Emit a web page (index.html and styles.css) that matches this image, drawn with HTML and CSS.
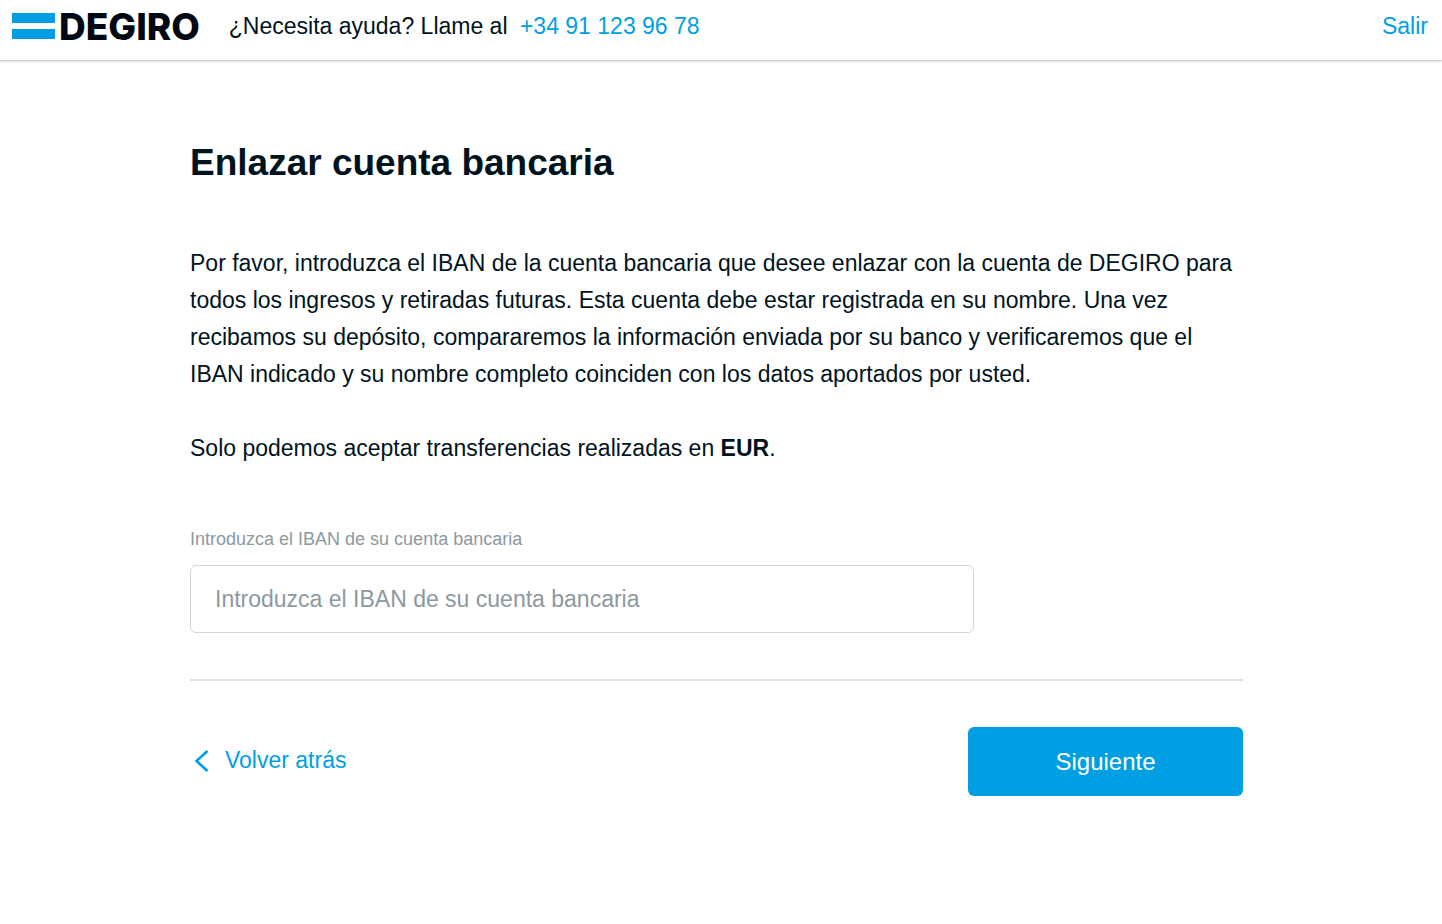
FILE: index.html
```html
<!DOCTYPE html>
<html lang="es">
<head>
  <meta charset="UTF-8">
  <meta name="viewport" content="width=device-width, initial-scale=1.0">
  <title>Enlazar cuenta bancaria</title>
  <link rel="stylesheet" href="styles.css">
</head>
<body>

  <header class="header">
    <a href="#" class="logo">
      <svg class="logo-bars" width="43" height="26" viewBox="0 0 43 26" aria-hidden="true">
        <path d="M0 0h43v10H0zM0 16h43v10H0z" fill="#009fe3" />
      </svg>
      <span class="logo-text">DEGIRO</span>
    </a>
    <p class="help">¿Necesita ayuda? Llame al <a href="tel:+34911239678" class="phone">+34 91 123 96 78</a></p>
    <a href="#" class="logout">Salir</a>
  </header>

  <main class="content">
    <h1 class="title">Enlazar cuenta bancaria</h1>

    <p class="text">Por favor, introduzca el IBAN de la cuenta bancaria que desee enlazar con la cuenta de DEGIRO para todos los ingresos y retiradas futuras. Esta cuenta debe estar registrada en su nombre. Una vez recibamos su depósito, compararemos la información enviada por su banco y verificaremos que el IBAN indicado y su nombre completo coinciden con los datos aportados por usted.</p>
    <p class="text">Solo podemos aceptar transferencias realizadas en <strong>EUR</strong>.</p>

    <form class="form">
      <label for="iban" class="label">Introduzca el IBAN de su cuenta bancaria</label>
      <input type="text" id="iban" class="input" placeholder="Introduzca el IBAN de su cuenta bancaria">

      <div class="actions">
        <a href="#" class="back">
          <svg width="16" height="24" viewBox="0 0 16 24" aria-hidden="true">
            <path d="M14.5 3L3.5 13L14.5 23" fill="none" stroke="#009fe3" stroke-width="2.6" />
          </svg>
          Volver atrás
        </a>
        <button type="submit" class="next">Siguiente</button>
      </div>
    </form>
  </main>

</body>
</html>
```

FILE: styles.css
```css
* {
  margin: 0;
  padding: 0;
  box-sizing: border-box;
}

body {
  font-family: "Liberation Sans", Arial, sans-serif;
  font-size: 23px;
  line-height: 37px;
  color: #00141e;
  background-color: #fff;
}

a {
  color: #009fe3;
  text-decoration: none;
}

.header {
  display: flex;
  align-items: center;
  height: 61px;
  padding: 0 14px 8px 12px;
  border-bottom: 1px solid #ccd6db;
  box-shadow: 0 1px 2px rgba(0, 20, 30, 0.15);
}

.logo {
  display: flex;
  align-items: center;
  gap: 4px;
}

.logo-text {
  font-family: Inter, sans-serif;
  font-size: 37px;
  font-weight: 800;
  color: #000814;
}

.help {
  margin-left: 29px;
}

.phone {
  margin-left: 6px;
}

.logout {
  margin-left: auto;
}

.content {
  padding: 78px 199px 48px 190px;
}

.title {
  margin-bottom: 58px;
  font-size: 37px;
  line-height: 48px;
}

.text {
  margin-bottom: 37px;
}

.form {
  padding-top: 23px;
}

.label {
  display: block;
  margin-bottom: 14px;
  font-size: 18px;
  line-height: 24px;
  color: #8c999f;
}

.input {
  display: block;
  width: 100%;
  max-width: 784px;
  height: 68px;
  padding: 0 24px;
  border: 1px solid #ccd6db;
  border-radius: 6px;
  font: inherit;
  color: inherit;
}

.input::placeholder {
  color: #8c999f;
  opacity: 1;
}

.actions {
  display: flex;
  align-items: center;
  justify-content: space-between;
  margin-top: 46px;
  padding-top: 46px;
  border-top: 2px solid #d9e0e3;
}

.back {
  display: flex;
  align-items: center;
  gap: 16px;
  padding: 0 0 3px 3px;
}

.next {
  width: 275px;
  height: 69px;
  border: 0;
  border-radius: 6px;
  font: inherit;
  font-size: 24px;
  color: #fff;
  background-color: #009fe3;
  cursor: pointer;
}
```
